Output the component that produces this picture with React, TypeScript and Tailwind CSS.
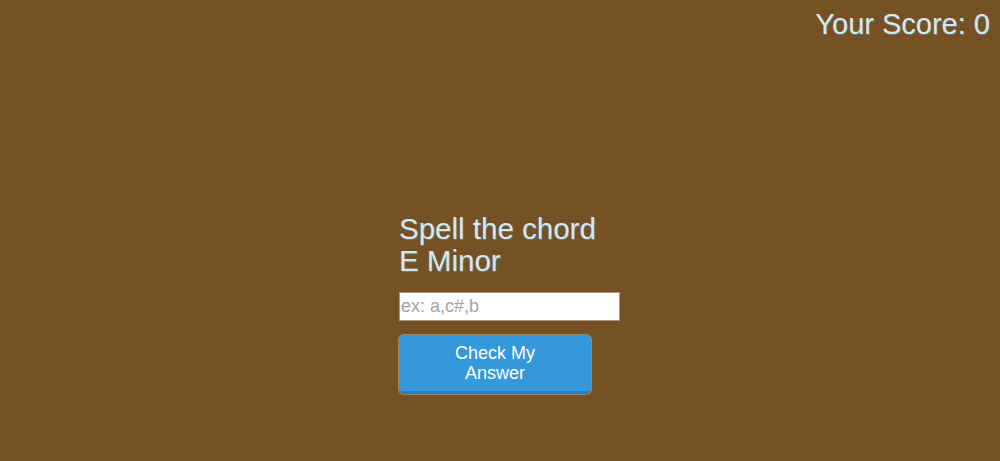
import { useState } from "react";

export default function App() {
  const [answer, setAnswer] = useState("");

  return (
    <div
      className="min-h-[461px] bg-[#765124] text-[#dfe4e6] font-['Liberation_Sans',Arial,sans-serif] [text-shadow:1px_1px_0_rgba(70,150,185,0.7)]"
    >
      <div className="flex justify-end pr-[10px] pt-[6px]">
        <h2 className="text-[29px] leading-[37px]">Your Score: 0</h2>
      </div>

      <div className="ml-[399px] mt-[170px] flex flex-col items-start">
        <h1 className="text-[29.5px] leading-[32px]">
          Spell the chord
          <br />
          E Minor
        </h1>

        <input
          value={answer}
          onChange={(e) => setAnswer(e.target.value)}
          type="text"
          placeholder="ex: a,c#,b"
          className="mt-[15px] w-[221px] h-[29px] bg-white border border-[#a89a88] px-[1px] text-[18px] text-gray-700 placeholder:text-[#a3a3a3] [text-shadow:none] outline-none"
        />

        <button
          type="button"
          className="mt-[14px] w-[192px] h-[59px] rounded-[5px] bg-[#3598db] border-b-[3px] border-[#2a7fb8] shadow-[0_0_0_1px_rgba(201,168,120,0.6)] text-white text-[18px] leading-[20px] [text-shadow:none]"
        >
          Check My
          <br />
          Answer
        </button>
      </div>
    </div>
  );
}
